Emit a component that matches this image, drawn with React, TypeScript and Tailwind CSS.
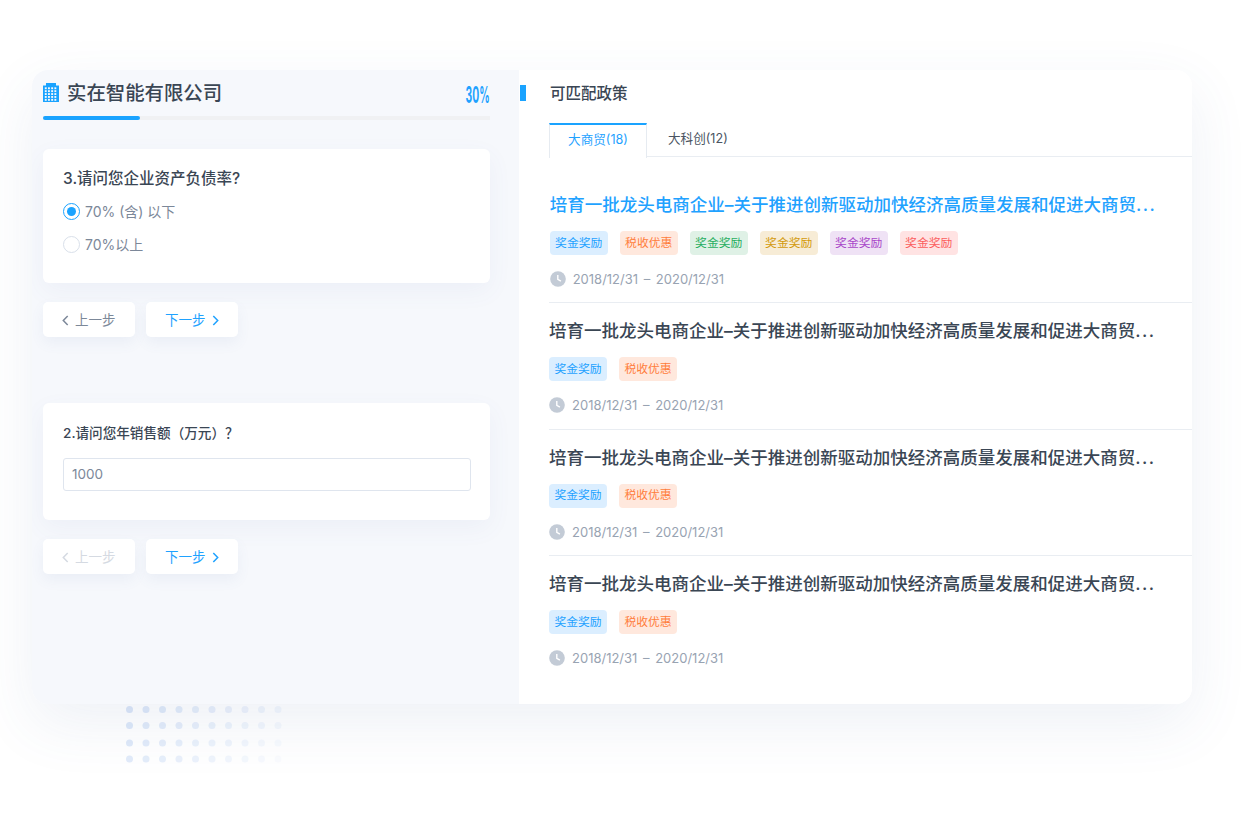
const fontStack = "font-['Inter','Noto_Sans_CJK_SC',sans-serif]";

const tagStyles = {
  blue: "bg-[#dbeeff] text-[#1fa2ff]",
  orange: "bg-[#ffe8dd] text-[#ff7d3b]",
  green: "bg-[#dff1e6] text-[#27ae60]",
  yellow: "bg-[#f7ecd6] text-[#d39a0c]",
  purple: "bg-[#efe2f5] text-[#a947c9]",
  red: "bg-[#ffe3e3] text-[#fb5e5e]",
};

type TagColor = keyof typeof tagStyles;

const policies: { active?: boolean; tags: [string, TagColor][] }[] = [
  {
    active: true,
    tags: [
      ["奖金奖励", "blue"],
      ["税收优惠", "orange"],
      ["奖金奖励", "green"],
      ["奖金奖励", "yellow"],
      ["奖金奖励", "purple"],
      ["奖金奖励", "red"],
    ],
  },
  { tags: [["奖金奖励", "blue"], ["税收优惠", "orange"]] },
  { tags: [["奖金奖励", "blue"], ["税收优惠", "orange"]] },
  { tags: [["奖金奖励", "blue"], ["税收优惠", "orange"]] },
];

function BuildingIcon() {
  const cells = [];
  for (let r = 0; r < 5; r++) {
    for (let c = 0; c < 4; c++) {
      cells.push(<rect key={`${r}-${c}`} x={1.8 + c * 3.2} y={4.3 + r * 2.9} width="1.9" height="1.9" fill="#f6f8fc" />);
    }
  }
  return (
    <svg width="16" height="19" viewBox="0 0 16 19" className="mb-[3px] shrink-0">
      <rect x="3" y="0" width="10" height="3" fill="#1aa3ff" />
      <rect x="0" y="2.5" width="16" height="16.5" fill="#1aa3ff" />
      {cells}
    </svg>
  );
}

function Chevron({ dir }: { dir: "left" | "right" }) {
  return (
    <svg width="7" height="11" viewBox="0 0 7 11" fill="none">
      <path d={dir === "left" ? "M5.7 1 1.3 5.5l4.4 4.5" : "M1.3 1l4.4 4.5L1.3 10"} stroke="currentColor" strokeWidth="1.5" />
    </svg>
  );
}

function StepButtons({ disabled }: { disabled?: boolean }) {
  return (
    <div className="flex gap-[11.5px]">
      <button
        className={`flex h-[35px] w-[91.5px] items-center justify-center gap-[6px] rounded-[5px] bg-white pt-[2px] text-[13.5px] shadow-[0_6px_14px_rgba(80,110,170,0.07)] ${
          disabled ? "text-[#d5dae2]" : "text-[#7c8899]"
        }`}
      >
        <Chevron dir="left" />
        上一步
      </button>
      <button className="flex h-[35px] w-[91.5px] items-center justify-center gap-[6px] rounded-[5px] bg-white pt-[2px] text-[13.5px] text-[#1fa2ff] shadow-[0_6px_14px_rgba(80,110,170,0.07)]">
        下一步
        <Chevron dir="right" />
      </button>
    </div>
  );
}

function ClockIcon() {
  return (
    <svg width="16" height="16" viewBox="0 0 16 16" className="shrink-0">
      <circle cx="8" cy="8" r="7.8" fill="#c3cbd6" />
      <path d="M7.8 4v4.3l3.1 1.8" fill="none" stroke="#fff" strokeWidth="1.4" />
    </svg>
  );
}

function PolicyRow({ active, tags, last }: { active?: boolean; tags: [string, TagColor][]; last?: boolean }) {
  return (
    <div className={`flex h-[126.3px] flex-col pt-[15px] ${last ? "" : "border-b border-[#e9edf2]"} ${active ? "pl-[0.7px]" : ""}`}>
      <div className={`text-[17.5px] leading-[26px] font-medium whitespace-nowrap ${active ? "text-[#1fa2ff]" : "text-[#3a4654]"}`}>
        培育一批龙头电商企业–关于推进创新驱动加快经济高质量发展和促进大商贸<span className="tracking-[1.5px]">...</span>
      </div>
      <div className="mt-[13px] flex gap-[12px]">
        {tags.map(([label, color], i) => (
          <span key={i} className={`flex h-[24px] w-[58px] items-center justify-center rounded-[4px] pt-[1px] text-[11.8px] ${tagStyles[color]}`}>
            {label}
          </span>
        ))}
      </div>
      <div className="mt-[15px] flex items-center gap-[7px] text-[13px] leading-[18px] text-[#98a3b2] [word-spacing:2px]">
        <ClockIcon />
        2018/12/31 – 2020/12/31
      </div>
    </div>
  );
}

function Dots() {
  const ys = [5.5, 21.5, 39, 55];
  const xs = [3.5, 20, 36.5, 53, 69.5, 86, 102.5, 119, 135.5, 152];
  return (
    <svg width="156" height="60" viewBox="0 0 156 60" className="absolute top-[704px] left-[126px]">
      {ys.map((y, r) =>
        xs.map((x, c) => (
          <circle key={`${r}-${c}`} cx={x} cy={y} r="3.5" fill="#d9e5f8" opacity={0.95 - c * 0.07 - r * 0.06} />
        ))
      )}
    </svg>
  );
}

export default function App() {
  return (
    <div className={`relative h-[820px] w-full overflow-hidden bg-white pt-[70px] pl-[32px] ${fontStack}`}>
      <Dots />
      <div className="relative flex h-[634px] w-[1160px] overflow-hidden rounded-[16px] shadow-[0_20px_60px_rgba(70,95,150,0.09)]">
        {/* left: questionnaire */}
        <div className="flex w-[487px] shrink-0 flex-col bg-[#f6f8fc] pt-[12px] pr-[29px] pl-[11px]">
          <div className="flex h-[24px] items-center">
            <BuildingIcon />
            <span className="ml-[8px] text-[19.4px] font-medium text-[#3a4654]">实在智能有限公司</span>
            <span className="mt-[3px] ml-auto inline-block origin-right scale-x-[0.45] text-[23px] font-bold whitespace-nowrap text-[#1fa2ff]">30%</span>
          </div>
          <div className="mt-[10px] h-[3.5px] w-full bg-[#f0f1f3]">
            <div className="h-full w-[97px] rounded-full bg-[#1aa3ff]" />
          </div>

          <div className="mt-[29px] h-[134px] rounded-[6px] bg-white px-[20px] pt-[18px] shadow-[0_8px_24px_rgba(80,110,170,0.06)]">
            <div className="text-[15.5px] leading-[24px] font-medium text-[#3a4654]">3.请问您企业资产负债率?</div>
            <div className="mt-[12px] flex h-[18px] items-center gap-[5px] text-[14px] text-[#7c8899]">
              <span className="flex h-[17px] w-[17px] items-center justify-center rounded-full border-[1.5px] border-[#1aa3ff]">
                <span className="h-[9px] w-[9px] rounded-full bg-[#1aa3ff]" />
              </span>
              70% (含) 以下
            </div>
            <div className="mt-[15px] flex h-[18px] items-center gap-[5px] text-[14px] text-[#7c8899]">
              <span className="h-[17px] w-[17px] rounded-full border-[1.5px] border-[#d9e0ea]" />
              70%以上
            </div>
          </div>
          <div className="mt-[19px]">
            <StepButtons />
          </div>

          <div className="mt-[66px] h-[117px] rounded-[6px] bg-white px-[20px] pt-[19px] shadow-[0_8px_24px_rgba(80,110,170,0.06)]">
            <div className="text-[13.6px] leading-[22px] font-medium text-[#3a4654]">2.请问您年销售额（万元）？</div>
            <div className="mt-[14px] flex h-[33px] w-[408px] items-center rounded-[3px] border-[1.5px] border-[#dfe5ee] px-[8px] text-[13.5px] text-[#7c8899]">
              1000
            </div>
          </div>
          <div className="mt-[19px]">
            <StepButtons disabled />
          </div>
        </div>

        {/* right: matched policies */}
        <div className="relative flex-1 bg-white pt-[12px]">
          <span className="absolute top-[15px] left-[1px] h-[16px] w-[6px] bg-[#1aa3ff]" />
          <div className="pl-[31px] text-[15.5px] leading-[24px] font-medium text-[#3a4654]">可匹配政策</div>
          <div className="mt-[17px] ml-[30px] flex h-[34px] border-b-[1.5px] border-[#e9edf2]">
            <div className="mb-[-1.5px] flex h-[35px] w-[98px] items-center justify-center border-x border-t-2 border-x-[#e6ebf1] border-t-[#1aa3ff] bg-white pb-[3px] text-[12.6px] text-[#1fa2ff]">
              大商贸(18)
            </div>
            <div className="ml-[21px] flex items-center text-[12.6px] text-[#4a5462]">大科创(12)</div>
          </div>
          <div className="mt-[20px] ml-[30px]">
            {policies.map((p, i) => (
              <PolicyRow key={i} active={p.active} tags={p.tags} last={i === policies.length - 1} />
            ))}
          </div>
        </div>
      </div>
    </div>
  );
}
